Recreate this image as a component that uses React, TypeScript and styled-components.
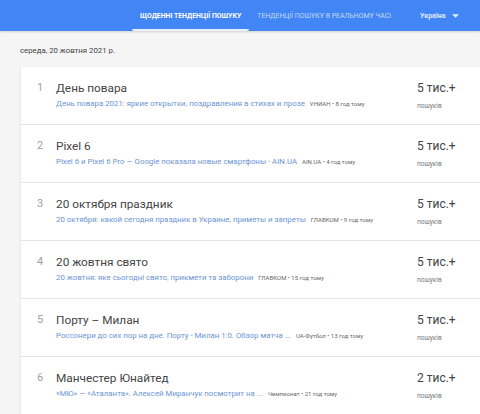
import styled, { createGlobalStyle } from "styled-components";

const Global = createGlobalStyle`
  html, body {
    margin: 0;
    padding: 0;
    background: #f5f5f5;
    overflow: hidden;
  }
  body {
    font-family: Roboto, "Noto Sans", Arial, sans-serif;
  }
`;

type Trend = {
  title: string;
  article: string;
  source: string;
  count: string;
};

const trends: Trend[] = [
  {
    title: "День повара",
    article: "День повара 2021: яркие открытки, поздравления в стихах и прозе",
    source: "УНИАН • 8 год тому",
    count: "5 тис.+",
  },
  {
    title: "Pixel 6",
    article: "Pixel 6 и Pixel 6 Pro — Google показала новые смартфоны - AIN.UA",
    source: "AIN.UA • 4 год тому",
    count: "5 тис.+",
  },
  {
    title: "20 октября праздник",
    article: "20 октября: какой сегодня праздник в Украине, приметы и запреты",
    source: "ГЛАВКОМ • 9 год тому",
    count: "5 тис.+",
  },
  {
    title: "20 жовтня свято",
    article: "20 жовтня: яке сьогодні свято, прикмети та заборони",
    source: "ГЛАВКОМ • 15 год тому",
    count: "5 тис.+",
  },
  {
    title: "Порту – Милан",
    article: "Россонери до сих пор на дне. Порту - Милан 1:0. Обзор матча ...",
    source: "UA-Футбол • 13 год тому",
    count: "5 тис.+",
  },
  {
    title: "Манчестер Юнайтед",
    article: "«МЮ» — «Аталанта». Алексей Миранчук посмотрит на ...",
    source: "Чемпионат • 21 год тому",
    count: "2 тис.+",
  },
];

export default function App(): JSX.Element {
  return (
    <>
      <Global />
      <Header>
        <Tab $active>Щоденні тенденції пошуку</Tab>
        <Tab>Тенденції пошуку в реальному часі</Tab>
        <Country>
          Україна
          <Caret viewBox="0 0 10 5">
            <path d="M0 0 L10 0 L5 5 Z" fill="currentColor" />
          </Caret>
        </Country>
      </Header>
      <DateLine>середа, 20 жовтня 2021 р.</DateLine>
      <Card>
        {trends.map((t, i) => (
          <Row key={t.title}>
            <Index>{i + 1}</Index>
            <Main>
              <Title>{t.title}</Title>
              <Article>
                <ArticleLink>{t.article}</ArticleLink>
                <Source>{t.source}</Source>
              </Article>
            </Main>
            <Volume>
              <Count>{t.count}</Count>
              <Caption>пошуків</Caption>
            </Volume>
          </Row>
        ))}
      </Card>
    </>
  );
}

const Header = styled.header`
  height: 31px;
  background: #4285f4;
  display: flex;
  align-items: stretch;
  padding-left: 132px;
  box-shadow: 0 1px 2px rgba(0, 0, 0, 0.15);
`;

const Tab = styled.div<{ $active?: boolean }>`
  display: flex;
  align-items: center;
  padding: 2px 8px 0;
  white-space: nowrap;
  font-size: 6.9px;
  font-weight: ${(p) => (p.$active ? 700 : 400)};
  text-transform: uppercase;
  color: ${(p) => (p.$active ? "#ffffff" : "rgba(255, 255, 255, 0.7)")};
  border-bottom: 2px solid ${(p) => (p.$active ? "#e8f0fe" : "transparent")};
  border-radius: 2px;
  box-sizing: border-box;
`;

const Country = styled.div`
  display: flex;
  align-items: center;
  gap: 7px;
  margin-left: 21px;
  font-size: 7px;
  font-weight: 700;
  white-space: nowrap;
  color: rgba(255, 255, 255, 0.85);
`;

const Caret = styled.svg`
  width: 7px;
  height: 4px;
`;

const DateLine = styled.div`
  padding: 15px 0 0 20px;
  height: 21px;
  font-size: 7.8px;
  color: #444;
`;

const Card = styled.div`
  margin-left: 21px;
  width: 480px;
  background: #fff;
  box-shadow: 0 1px 2px rgba(0, 0, 0, 0.12);
`;

const Row = styled.div`
  display: grid;
  grid-template-columns: 19px 1fr 84px;
  padding-left: 16px;
  height: 58px;
  box-sizing: border-box;
  border-bottom: 1px solid #e6e6e6;
`;

const Index = styled.div`
  padding-top: 14px;
  font-size: 11px;
  color: #a0a0a0;
`;

const Main = styled.div`
  display: flex;
  flex-direction: column;
  padding-top: 13px;
  min-width: 0;
`;

const Title = styled.div`
  font-size: 11.8px;
  line-height: 16px;
  color: #444;
`;

const Article = styled.div`
  display: flex;
  align-items: baseline;
  gap: 5px;
  margin-top: 3px;
  white-space: nowrap;
`;

const ArticleLink = styled.span`
  font-size: 7.85px;
  color: #6c95d8;
`;

const Source = styled.span`
  font-size: 6px;
  color: #666;
`;

const Volume = styled.div`
  display: flex;
  flex-direction: column;
  padding-top: 13px;
`;

const Count = styled.div`
  font-size: 12px;
  line-height: 16px;
  color: #444;
`;

const Caption = styled.div`
  margin-top: 6px;
  font-size: 6.5px;
  color: #777;
`;
